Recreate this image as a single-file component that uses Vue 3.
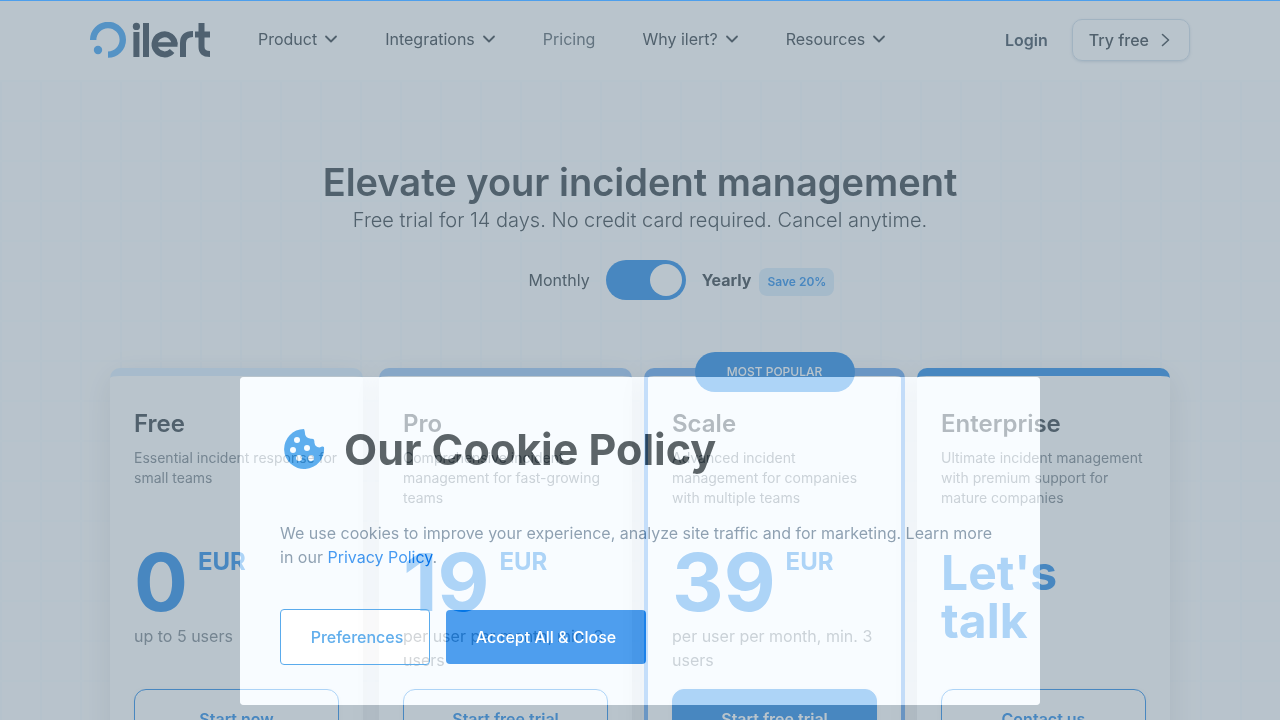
<script setup>
import { ref } from 'vue'

const yearly = ref(true)

const links = [
  { label: 'Product', menu: true },
  { label: 'Integrations', menu: true },
  { label: 'Pricing', menu: false },
  { label: 'Why ilert?', menu: true },
  { label: 'Resources', menu: true },
]

const plans = [
  { id: 'free', name: 'Free', text: 'Essential incident response for small teams', price: '0', note: 'up to 5 users', action: 'Start now' },
  { id: 'pro', name: 'Pro', text: 'Comprehensive incident management for fast-growing teams', price: '19', note: 'per user per month, min. 3 users', action: 'Start free trial' },
  { id: 'scale', name: 'Scale', text: 'Advanced incident management for companies with multiple teams', price: '39', note: 'per user per month, min. 3 users', action: 'Start free trial', popular: true },
  { id: 'enterprise', name: 'Enterprise', text: 'Ultimate incident management with premium support for mature companies', talk: "Let's talk", action: 'Contact us' },
]
</script>

<template>
  <div class="page">
    <header class="header">
      <div class="container bar">
        <a href="#" class="logo" aria-label="ilert">
          <svg width="120" height="36" viewBox="0 0 120 36">
            <path d="M3.200 18a14.800 14.800 0 1 1 14.800 14.600" fill="none" stroke="#61b1f4" stroke-width="6.400" />
            <circle cx="8" cy="28" r="4.200" fill="#61b1f4" />
            <g fill="none" stroke="#57636e" stroke-width="6">
              <circle cx="46.400" cy="4.400" r="3.600" fill="#57636e" stroke="none" />
              <path d="M46.400 10v25M56 1v34" />
              <path d="M64 22.500h23.500" stroke-width="4.500" />
              <path d="M84.600 22.500a10 10 0 1 0-2.500 6.500" />
              <path d="M93 35V21q0-9 10-9" />
              <path d="M111.500 1v24q0 7 8.500 7M105 12.500h15" stroke-width="6" />
            </g>
          </svg>
        </a>
        <nav class="nav">
          <a v-for="l in links" :key="l.label" href="#" class="nav-link" :class="{ current: !l.menu }">
            {{ l.label }}
            <svg v-if="l.menu" width="14" height="14" viewBox="0 0 14 14"><path d="M2 4.500l5 5 5-5" fill="none" stroke="currentColor" stroke-width="1.800" stroke-linecap="round" stroke-linejoin="round" /></svg>
          </a>
        </nav>
        <a href="#" class="login">Login</a>
        <a href="#" class="try">Try free
          <svg width="16" height="16" viewBox="0 0 16 16"><path d="M5.500 2.500l6 5.500-6 5.500" fill="none" stroke="currentColor" stroke-width="1.600" stroke-linecap="round" stroke-linejoin="round" /></svg>
        </a>
      </div>
    </header>

    <main class="hero">
      <h1>Elevate your incident management</h1>
      <p class="sub">Free trial for 14 days. No credit card required. Cancel anytime.</p>
      <div class="billing">
        <label for="cycle">Monthly</label>
        <input id="cycle" v-model="yearly" type="checkbox" class="switch">
        <label for="cycle" class="yearly">Yearly<span class="save">Save 20%</span></label>
      </div>
      <div class="plans">
        <section v-for="p in plans" :key="p.id" class="plan" :class="p.id">
          <span v-if="p.popular" class="popular">MOST POPULAR</span>
          <h2>{{ p.name }}</h2>
          <p class="about">{{ p.text }}</p>
          <p v-if="p.talk" class="talk">{{ p.talk }}</p>
          <template v-else>
            <p class="price"><span class="amount">{{ p.price }}</span><span class="currency">EUR</span></p>
            <p class="note">{{ p.note }}</p>
          </template>
          <a href="#" class="action">{{ p.action }}</a>
        </section>
      </div>
    </main>

    <div class="cookie-layer">
      <section class="cookie" role="dialog" aria-labelledby="cookie-title">
        <div class="cookie-head">
          <svg class="cookie-icon" width="48" height="48" viewBox="0 0 24 24"><path d="M12 2A10 10 0 1 0 22 11q-.4-.3-1-.2-.5.4-1.300.4-2.200-.2-2.500-2.500.1-1-.5-1.700-.8-.2-1.300-.1-3-.4-3-3.500-.1-.8-.4-1.400zM8.500 6a1.500 1.500 0 1 1 0 3 1.500 1.500 0 0 1 0-3zm-2 5a1.500 1.500 0 1 1 0 3 1.500 1.500 0 0 1 0-3zm7-1a1.500 1.500 0 1 1 0 3 1.500 1.500 0 0 1 0-3zm-4 5a1.500 1.500 0 1 1 0 3 1.500 1.500 0 0 1 0-3zm6 0a1.500 1.500 0 1 1 0 3 1.500 1.500 0 0 1 0-3z" fill-rule="evenodd" /></svg>
          <h2 id="cookie-title">Our Cookie Policy</h2>
        </div>
        <p class="cookie-text"><span class="ink">We use cookies to improve your experience, analyze site traffic and for marketing. Learn more in our <a href="#">Privacy Policy</a>.</span></p>
        <div class="cookie-actions">
          <button type="button" class="prefs">Preferences</button>
          <button type="button" class="accept"><span>Accept All &amp; Close</span></button>
        </div>
      </section>
    </div>
    <div class="progress"></div>
  </div>
</template>

<style>
body { margin: 0; background: #fff; }
</style>

<style scoped>
* { box-sizing: border-box; margin: 0; }
a { color: inherit; text-decoration: none; }
svg { display: block; flex: none; }
.page {
  position: relative;
  height: 100vh;
  overflow: hidden;
  font: 400 16px/24px Inter, "Liberation Sans", sans-serif;
  color: #5b6369;
}
.container { max-width: 1100px; margin: 0 auto; }
.header { height: 80px; }
.bar { display: flex; align-items: center; height: 80px; }
.nav { display: flex; gap: 47px; margin-left: 48px; padding-bottom: 2px; flex: 1; white-space: nowrap; }
.nav-link { display: flex; align-items: center; gap: 7px; }
.nav-link.current { color: #778087; }
.login { font-weight: 600; color: #606c78; margin-right: 24px; }
.try {
  display: flex; align-items: center; gap: 8px; height: 42px; padding: 0 16px;
  border: 1px solid #dae4ee; border-radius: 10px; font-weight: 500;
  box-shadow: 0 1px 3px rgba(90, 120, 150, .2);
}
.hero {
  padding-top: 80px; text-align: center;
  background-color: #fefeff;
  background-image: linear-gradient(#fbfdff 2px, transparent 2px), linear-gradient(90deg, #f9fcff 2px, transparent 2px);
  background-size: 40px 40px;
}
h1 { font-size: 38px; line-height: 44px; margin-bottom: 2px; font-weight: 600; }
.sub { font-size: 20px; line-height: 28px; font-weight: 300; }
.billing { display: flex; justify-content: center; align-items: center; gap: 16px; height: 40px; margin-top: 26px; }
.switch {
  appearance: none; width: 80px; height: 40px; padding: 4px; border-radius: 20px;
  background: #4d9fec; display: flex;
}
.switch::before { content: ""; width: 32px; height: 32px; border-radius: 50%; background: #fff; }
.switch:checked { justify-content: flex-end; }
.yearly { position: relative; font-weight: 700; }
.save {
  position: absolute; left: 100%; top: 0; margin-left: 8px; padding: 2px 8px; border-radius: 8px;
  background: #e0effc; color: #4d9fec; font-size: 12px; font-weight: 600; white-space: nowrap; line-height: 24px;
}
.plans {
  display: grid; grid-template-columns: repeat(4, 1fr); gap: 16px; max-width: 1060px;
  margin: 68px auto 0; text-align: left;
}
.plan {
  position: relative; height: 480px; padding: 32px 24px; border-top: 8px solid #e2f1ff;
  border-radius: 10px 10px 0 0; background: #fff; box-shadow: 0 8px 32px rgba(0, 0, 0, .09);
}
.pro { border-top-color: #b0d1f8; }
.scale { border: 4px solid #83b7f3; border-top-width: 8px; margin: 0 -4px; }
.enterprise { border-top-color: #4d9fec; }
.popular {
  position: absolute; top: -24px; left: 50%; margin-left: -80px; width: 160px; height: 40px;
  border-radius: 20px; background: #4d9fec; color: #fff; font-size: 12px; font-weight: 500;
  line-height: 40px; text-align: center;
}
h2 { font-size: 24px; line-height: 32px; font-weight: 600; }
.about { margin-top: 8px; font-size: 14px; line-height: 20px; height: 90px; color: #939ba2; }
.price { display: flex; gap: 10px; height: 80px; margin-top: 4px; color: #4d9fec; font-weight: 700; }
.amount { font-size: 80px; line-height: 80px; }
.currency { font-size: 24px; line-height: 40px; }
.note { height: 65px; margin-top: 2px; color: #939ba2; }
.talk { width: 130px; height: 146px; padding-top: 6px; margin-top: 5px; font-size: 48px; line-height: 48px; font-weight: 700; color: #4d9fec; }
.action {
  display: block; height: 60px; border: 1px solid #4d9fec; border-radius: 12px; color: #4d9fec;
  font-weight: 600; line-height: 58px; text-align: center; box-shadow: 0 1px 6px rgba(0, 0, 0, .04);
}
.scale .action { background: #4d9fec; color: #fff; }

/* The layer stays out of its own stacking context so the dialog's inks blend with the page. */
.cookie-layer { position: absolute; inset: 0; display: flex; justify-content: center; align-items: flex-end; padding-bottom: 15px; }
.cookie {
  width: 800px; max-width: 100%; padding: 40px; border-radius: 4px;
  background: rgba(243, 250, 255, .58);
  box-shadow: 0 0 0 100vmax rgba(66, 96, 116, .37);
}
.cookie-head { display: flex; align-items: center; gap: 16px; height: 64px; }
.cookie-icon { fill: rgb(154, 78, 17); mix-blend-mode: difference; }
.cookie-head h2 { font-size: 43px; line-height: 64px; font-weight: 700; color: rgb(156, 152, 151); mix-blend-mode: difference; white-space: nowrap; }
.cookie-text { padding: 40px 0; }
.ink { display: block; color: rgb(106, 92, 78); mix-blend-mode: difference; }
.ink a { color: rgb(178, 98, 14); }
.cookie-actions { display: flex; align-items: center; gap: 16px; }
.cookie-actions button { font: 500 16px/24px Inter, sans-serif; border-radius: 4px; border: 0; }
.cookie-actions .prefs { position: relative; width: 150px; height: 56px; padding: 0 0 0 4px; border: 1px solid #5aabec; background: none; color: #5aabec; }
.prefs::before { content: ""; position: absolute; inset: 0; background: rgb(7, 3, 0); mix-blend-mode: plus-lighter; }
.cookie-actions .accept { position: relative; width: 200px; height: 54px; background: none; color: #fff; }
.accept::before { content: ""; position: absolute; inset: 0; border-radius: 4px; background: rgb(170, 94, 17); mix-blend-mode: difference; }
.accept span { position: relative; }
.progress { position: absolute; top: 0; left: 0; right: 0; height: 1px; background: #4d9fec; }
</style>
